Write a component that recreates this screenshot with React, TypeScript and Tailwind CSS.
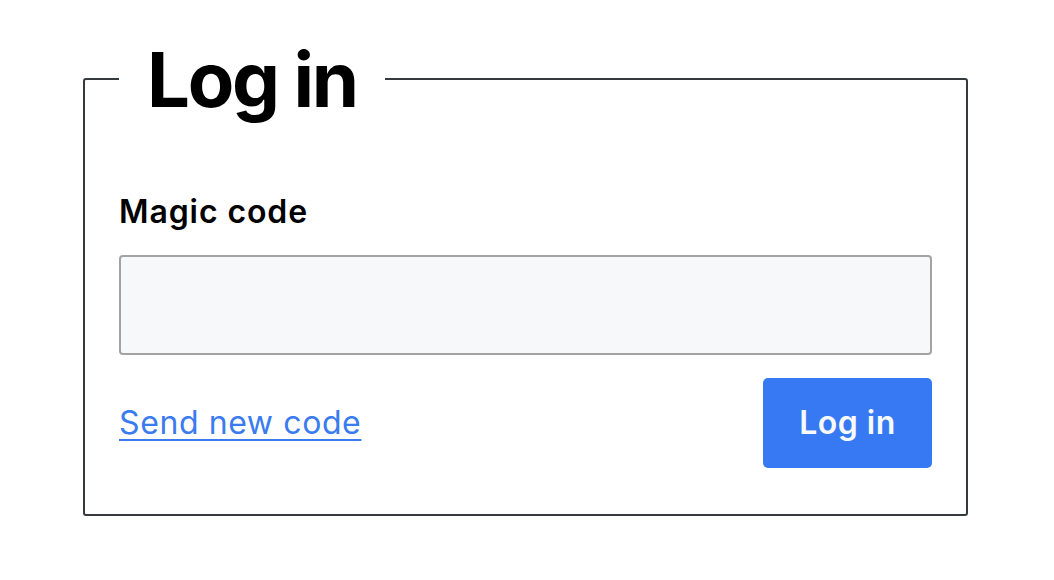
import React from 'react';

export default function App() {
  return (
    <div className="min-h-[580px] w-[1054px] bg-white pt-[31px] pl-[83px] font-['Inter','Helvetica_Neue',sans-serif] text-black">
      <fieldset className="w-[885px] rounded-[3px] border-2 border-[#363a3e] px-[34px] pt-[61px] pb-[46px]">
        {/* Title */}
        <legend className="px-[28px] text-[76px] leading-[96px] font-bold tracking-[-2.3px]">
          Log in
        </legend>

        <label htmlFor="code" className="block text-[32px] leading-[48px] font-semibold tracking-[0.9px]">
          Magic code
        </label>
        <input
          id="code"
          type="text"
          className="mt-[19px] block h-[100px] w-full rounded-[4px] border-2 border-[#a3a3a3] bg-[#f7f8fa] px-4 text-[32px] outline-none"
        />

        <div className="mt-[23px] flex items-center justify-between">
          <a href="#" className="text-[32px] leading-[48px] text-[#3a7bf0] tracking-[0.6px] underline decoration-2 underline-offset-[5px]">
            Send new code
          </a>
          <button className="h-[90px] w-[169px] rounded-[5px] bg-[#3779f3] text-[32px] font-semibold tracking-[0.5px] text-[#f8f9fb]">
            Log in
          </button>
        </div>
      </fieldset>
    </div>
  );
}
